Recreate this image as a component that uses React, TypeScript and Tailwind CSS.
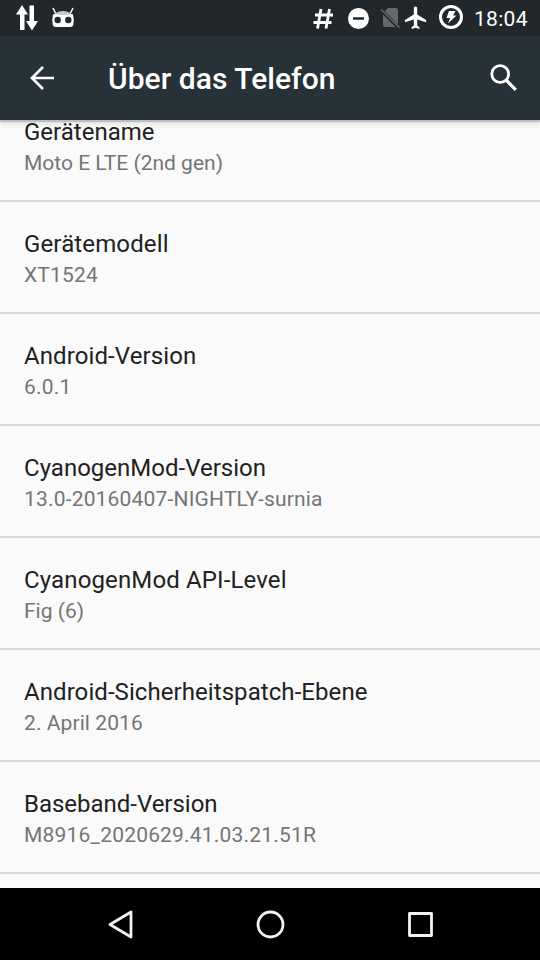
const rows = [
  { title: 'Gerätename', value: 'Moto E LTE (2nd gen)', titleGap: 'tracking-[0.01px]', valueGap: 'tracking-[0px]' },
  { title: 'Gerätemodell', value: 'XT1524', titleGap: 'tracking-[0.13px]', valueGap: 'tracking-[0.17px]' },
  { title: 'Android-Version', value: '6.0.1', titleGap: 'tracking-[0.1px]', valueGap: 'tracking-[0.2px]' },
  { title: 'CyanogenMod-Version', value: '13.0-20160407-NIGHTLY-surnia', titleGap: 'tracking-[0.01px]', valueGap: 'tracking-[0.18px]' },
  { title: 'CyanogenMod API-Level', value: 'Fig (6)', titleGap: 'tracking-[0.13px]', valueGap: 'tracking-[0px]' },
  { title: 'Android-Sicherheitspatch-Ebene', value: '2. April 2016', titleGap: 'tracking-[0.07px]', valueGap: 'tracking-[0.08px]' },
  { title: 'Baseband-Version', value: 'M8916_2020629.41.03.21.51R', titleGap: 'tracking-[-0.02px]', valueGap: 'tracking-[0.19px]' },
];

function NotificationIcons() {
  return (
    <svg className="h-9 w-[90px] shrink-0" viewBox="0 0 90 36" fill="#fff">
      <path d="M22 5l-6 9.500H20v15.500h4.500V14.500H28zM32 30.500l6-9.500H34V5.500h-4.500V21H26z" />
      <path d="M53.200 8.500l2.300 4.500M72.800 8.500L70.500 13" stroke="#fff" strokeWidth="1.500" strokeLinecap="round" />
      <path d="M53 14.500Q63 10.500 73 14.500l.8 5.500-.5 4.500q-.5 2.500-3 2.500H55.700q-2.500 0-3-2.500L52.200 20z" />
      <path d="M54.500 14Q58 11 63 11t8.500 3q-8.500 2-17 0z" fill="#c6c7c8" />
      <circle cx="57.700" cy="20" r="3.200" fill="#21272b" />
      <circle cx="68.300" cy="20" r="3.200" fill="#21272b" />
    </svg>
  );
}

function SystemIcons() {
  return (
    <svg className="ml-[220px] h-9 w-[160px] shrink-0" viewBox="310 0 160 36" fill="none">
      <path d="M321 9l-3.500 19.500M329.500 9L326 28.500M315 15h18M313.500 22.500h18" stroke="#fff" strokeWidth="2.800" />
      <circle cx="358.500" cy="18.500" r="10.500" fill="#fff" />
      <path d="M353 18.500h11" stroke="#21272b" strokeWidth="2.500" />
      <path d="M388 8h8q2 0 2 2v17h-13q-2 0-2-2V13z" fill="#65696c" />
      <path d="M381 10l18 18" stroke="#21272b" strokeWidth="3.500" />
      <path d="M381 9.500l18.500 18" stroke="#65696c" strokeWidth="1.500" />
      <path transform="translate(403 5.500) scale(1.060)" d="M21.800 15.700v-2.100L13.400 8.400V2.600c0-.9-.7-1.600-1.600-1.600s-1.600.7-1.600 1.600v5.800l-8.400 5.200v2.100l8.400-2.600v5.800l-2.100 1.600v1.600l3.700-1.100 3.700 1.100v-1.600l-2.100-1.600v-5.800z" fill="#fff" />
      <circle cx="451" cy="17" r="10.500" stroke="#fff" strokeWidth="3" />
      <path d="M449 11h6.500l-2.500 4.500h3.500l-8.500 8 2-5.500h-3.500z" fill="#fff" />
    </svg>
  );
}

export default function App() {
  return (
    <div className="flex h-[960px] w-[540px] flex-col overflow-hidden bg-[#fafafa] font-['Roboto',sans-serif]">
      <div className="flex h-9 shrink-0 items-center bg-[#21272b] text-white">
        <NotificationIcons />
        <SystemIcons />
        <span className="ml-[4px] mt-px text-[21px] leading-9 tracking-[0.3px]">18:04</span>
      </div>
      <header className="relative z-10 flex h-[84px] shrink-0 items-center bg-[#263238] pr-[22px] text-white shadow-[0_2px_1px_rgba(0,0,0,0.18),0_5px_5px_rgba(0,0,0,0.08)]">
        <svg className="ml-6 size-9" viewBox="24 60 36 36" fill="none" stroke="#fff" strokeWidth="2.700">
          <path d="M54 78H32M43 67L32 78l11 11" />
        </svg>
        <h1 className="ml-12 text-[30px] font-medium tracking-[0.04px]">Über das Telefon</h1>
        <svg className="ml-auto size-8" viewBox="486 62 32 32" fill="none" stroke="#fff" strokeWidth="2.800">
          <circle cx="500.200" cy="74" r="8.400" />
          <path d="M506 80l9.800 9.800" strokeWidth="3.200" />
        </svg>
      </header>
      <main className="flex-1 overflow-hidden">
        <div className="-mt-[30px]">
          {rows.map((row) => (
            <div key={row.title} className="h-28 border-b-2 border-[#dadada] px-6 pt-[26px]">
              <div className={`text-[24px] leading-8 text-[#212121] ${row.titleGap}`}>{row.title}</div>
              <div className={`text-[21px] leading-[30px] text-[#757575] ${row.valueGap}`}>{row.value}</div>
            </div>
          ))}
        </div>
      </main>
      <nav className="h-[72px] shrink-0 bg-black">
        <svg className="h-[72px] w-[540px]" viewBox="0 888 540 72" fill="none" stroke="#f2f2f2" strokeWidth="2.800" strokeLinejoin="round">
          <path d="M110 924.500l21-12.500v25z" />
          <circle cx="270.500" cy="924.500" r="12.500" />
          <path d="M409.500 913.500h22v22h-22z" />
        </svg>
      </nav>
    </div>
  );
}
